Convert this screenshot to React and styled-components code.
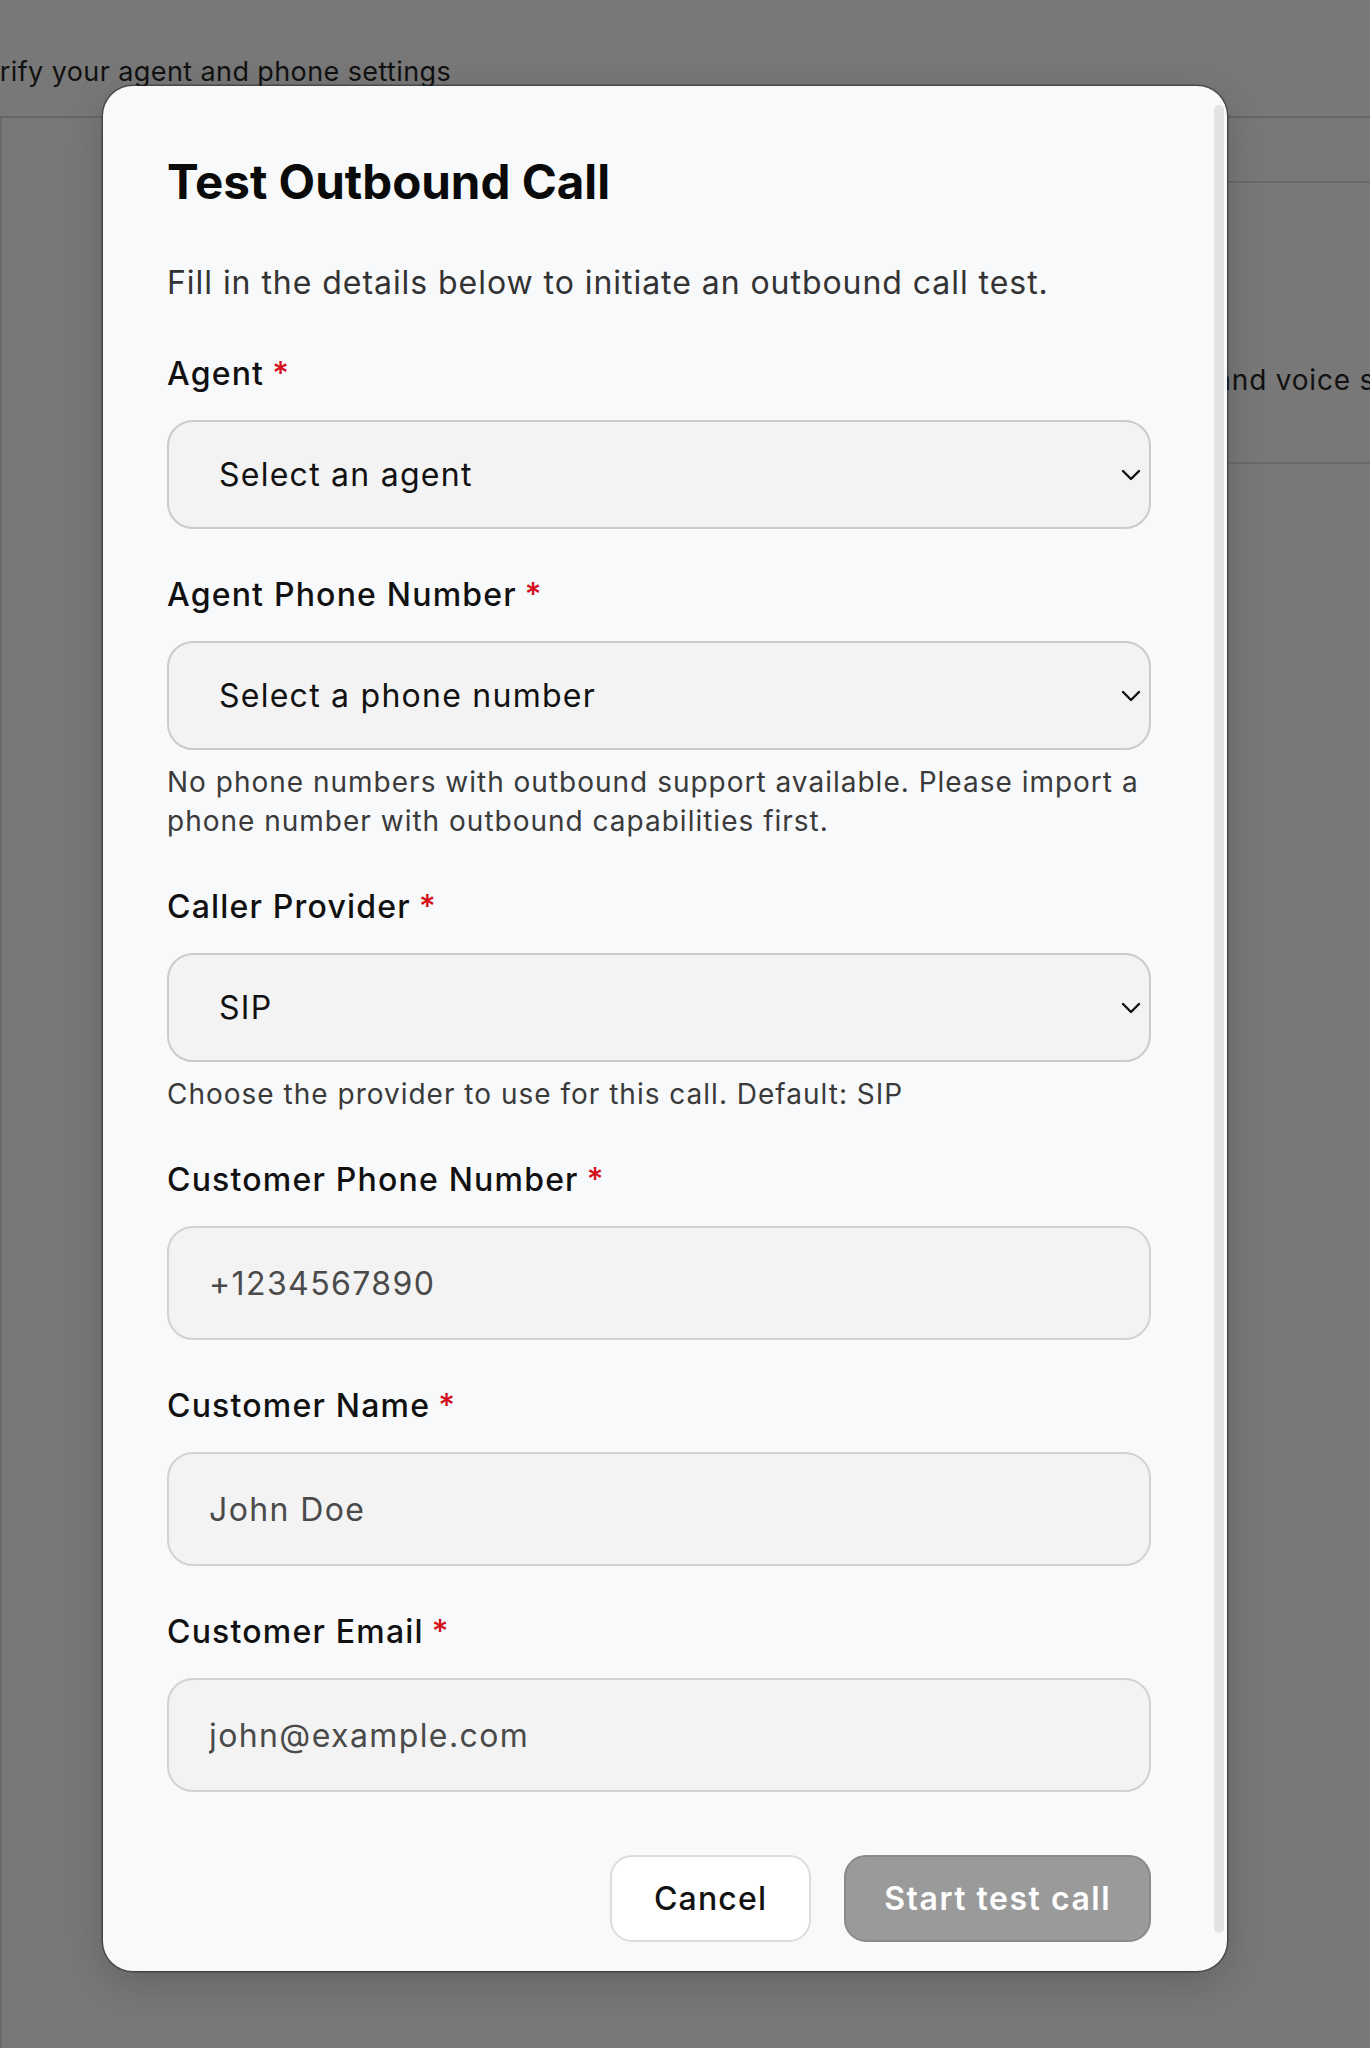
import React from 'react';
import styled, { createGlobalStyle } from 'styled-components';

const GlobalStyle = createGlobalStyle`
  * { box-sizing: border-box; }
  body {
    margin: 0;
    font-family: Inter, "Noto Sans", "Liberation Sans", sans-serif;
    background: #787878;
  }
`;

/* ---------- page behind the dialog (already dimmed) ---------- */

const Page = styled.div`
  position: relative;
  height: 2048px;
  overflow: hidden;
  background: #787878;
  color: #111;
`;

const TopBar = styled.header`
  height: 118px;
  border-bottom: 2px solid #666;
  padding-top: 55px;
  font-size: 27px;
  line-height: 34px;
  letter-spacing: 0.4px;
  white-space: nowrap;
  .crumb {
    margin-left: -34px;
  }
`;

const Main = styled.div`
  display: flex;
  height: calc(100% - 118px);
`;

const Sidebar = styled.aside`
  width: 14px;
  border-right: 2px solid #6a6a6a;
`;

const Content = styled.main`
  flex: 1;
  padding-top: 63px;
`;

const SettingsCard = styled.section`
  margin-left: 700px;
  height: 283px;
  border-top: 2px solid #6a6a6a;
  border-bottom: 2px solid #6a6a6a;
  padding: 180px 0 0 268px;
  font-size: 28px;
  line-height: 34px;
  letter-spacing: 0.8px;
  white-space: nowrap;
`;

/* ---------- dialog ---------- */

const Overlay = styled.div`
  position: absolute;
  inset: 0;
  display: flex;
  align-items: flex-start;
  padding: 86px 0 0 103px;
`;

const Dialog = styled.div`
  width: 1124px;
  height: 1885px;
  display: flex;
  background: #f8f9fb;
  border-radius: 30px;
  box-shadow: 0 0 0 1.5px rgba(40, 40, 40, 0.55), 0 12px 40px rgba(0, 0, 0, 0.18);
`;

const Body = styled.div`
  flex: 1;
  display: flex;
  flex-direction: column;
  padding: 68px 63px 29px 64px;
`;

const ScrollRail = styled.div`
  width: 10px;
  margin: 19px 3px 38px 0;
  border-radius: 5px;
  background: #e1e2e4;
`;

const Title = styled.h2`
  margin: 0;
  font-size: 47.5px;
  line-height: 56px;
  font-weight: 700;
  color: #0a0a0a;
`;

const Subtitle = styled.p`
  margin: 53px 0 0;
  font-size: 32px;
  line-height: 40px;
  letter-spacing: 0.95px;
  color: #333;
`;

const Fields = styled.div`
  display: flex;
  flex-direction: column;
  gap: 46px;
  margin-top: 51px;
`;

const Field = styled.div`
  display: flex;
  flex-direction: column;
`;

const Label = styled.label`
  font-size: 32px;
  line-height: 40px;
  font-weight: 500;
  letter-spacing: 1.2px;
  color: #111;
  margin-bottom: 26px;
  .req {
    color: #d40f1a;
    margin-left: 8px;
  }
`;

const SelectWrap = styled.div`
  position: relative;
  svg {
    position: absolute;
    right: 10px;
    top: 50%;
    transform: translateY(-50%);
    pointer-events: none;
  }
`;

const Select = styled.select`
  appearance: none;
  width: 100%;
  height: 109px;
  padding: 0 60px 0 50px;
  border: 2px solid #cbcbcb;
  border-radius: 26px;
  background: #f3f3f3;
  font-family: inherit;
  font-size: 32px;
  letter-spacing: 1.25px;
  color: #111;
  outline: none;
`;

const Input = styled.input`
  width: 100%;
  height: 114px;
  padding: 0 40px;
  border: 2px solid #d2d2d2;
  border-radius: 26px;
  background: #f3f3f3;
  font-family: inherit;
  font-size: 32px;
  letter-spacing: 1.4px;
  color: #111;
  outline: none;
  &::placeholder {
    color: #4a4a4a;
  }
`;

const Help = styled.p`
  margin: 13px 0 0;
  font-size: 28px;
  line-height: 39px;
  letter-spacing: 1px;
  color: #3a3a3a;
`;

const Footer = styled.div`
  display: flex;
  justify-content: flex-end;
  gap: 33px;
  margin-top: auto;
`;

const Button = styled.button`
  height: 87px;
  padding: 0 ${(p) => (p.$primary ? '38px' : '42px')};
  border-radius: 22px;
  font-family: inherit;
  font-size: 32px;
  letter-spacing: ${(p) => (p.$primary ? '1.5px' : '1.2px')};
  font-weight: ${(p) => (p.$primary ? 600 : 500)};
  border: 2px solid ${(p) => (p.$primary ? '#8a8a8a' : '#dcdcdc')};
  background: ${(p) => (p.$primary ? '#9a9a9a' : '#fff')};
  color: ${(p) => (p.$primary ? '#fff' : '#111')};
  cursor: ${(p) => (p.disabled ? 'default' : 'pointer')};
`;

const Chevron = () => (
  <svg width="20" height="12" viewBox="0 0 20 12" fill="none">
    <path d="M2 2l8 8 8-8" stroke="#111" strokeWidth="2.4" strokeLinecap="round" strokeLinejoin="round" />
  </svg>
);

function SelectField({ label, value, options, help }) {
  return (
    <Field>
      <Label>
        {label}
        <span className="req">*</span>
      </Label>
      <SelectWrap>
        <Select defaultValue={value}>
          {options.map((o) => (
            <option key={o}>{o}</option>
          ))}
        </Select>
        <Chevron />
      </SelectWrap>
      {help && <Help>{help}</Help>}
    </Field>
  );
}

function TextField({ label, placeholder, type = 'text' }) {
  return (
    <Field>
      <Label>
        {label}
        <span className="req">*</span>
      </Label>
      <Input type={type} placeholder={placeholder} />
    </Field>
  );
}

export default function App() {
  return (
    <>
      <GlobalStyle />
      <Page>
        <TopBar>
          <span className="crumb">Verify your agent and phone settings</span>
        </TopBar>
        <Main>
          <Sidebar />
          <Content>
            <SettingsCard>Choose an agent and voice settings for this test</SettingsCard>
          </Content>
        </Main>

        <Overlay>
          <Dialog role="dialog" aria-modal="true">
            <Body>
              <Title>Test Outbound Call</Title>
              <Subtitle>Fill in the details below to initiate an outbound call test.</Subtitle>

              <Fields>
                <SelectField label="Agent" value="Select an agent" options={['Select an agent']} />
                <SelectField
                  label="Agent Phone Number"
                  value="Select a phone number"
                  options={['Select a phone number']}
                  help="No phone numbers with outbound support available. Please import a phone number with outbound capabilities first."
                />
                <SelectField
                  label="Caller Provider"
                  value="SIP"
                  options={['SIP', 'Twilio']}
                  help="Choose the provider to use for this call. Default: SIP"
                />
                <TextField label="Customer Phone Number" placeholder="+1234567890" type="tel" />
                <TextField label="Customer Name" placeholder="John Doe" />
                <TextField label="Customer Email" placeholder="john@example.com" type="email" />
              </Fields>

              <Footer>
                <Button type="button">Cancel</Button>
                <Button type="button" $primary disabled>
                  Start test call
                </Button>
              </Footer>
            </Body>
            <ScrollRail />
          </Dialog>
        </Overlay>
      </Page>
    </>
  );
}
